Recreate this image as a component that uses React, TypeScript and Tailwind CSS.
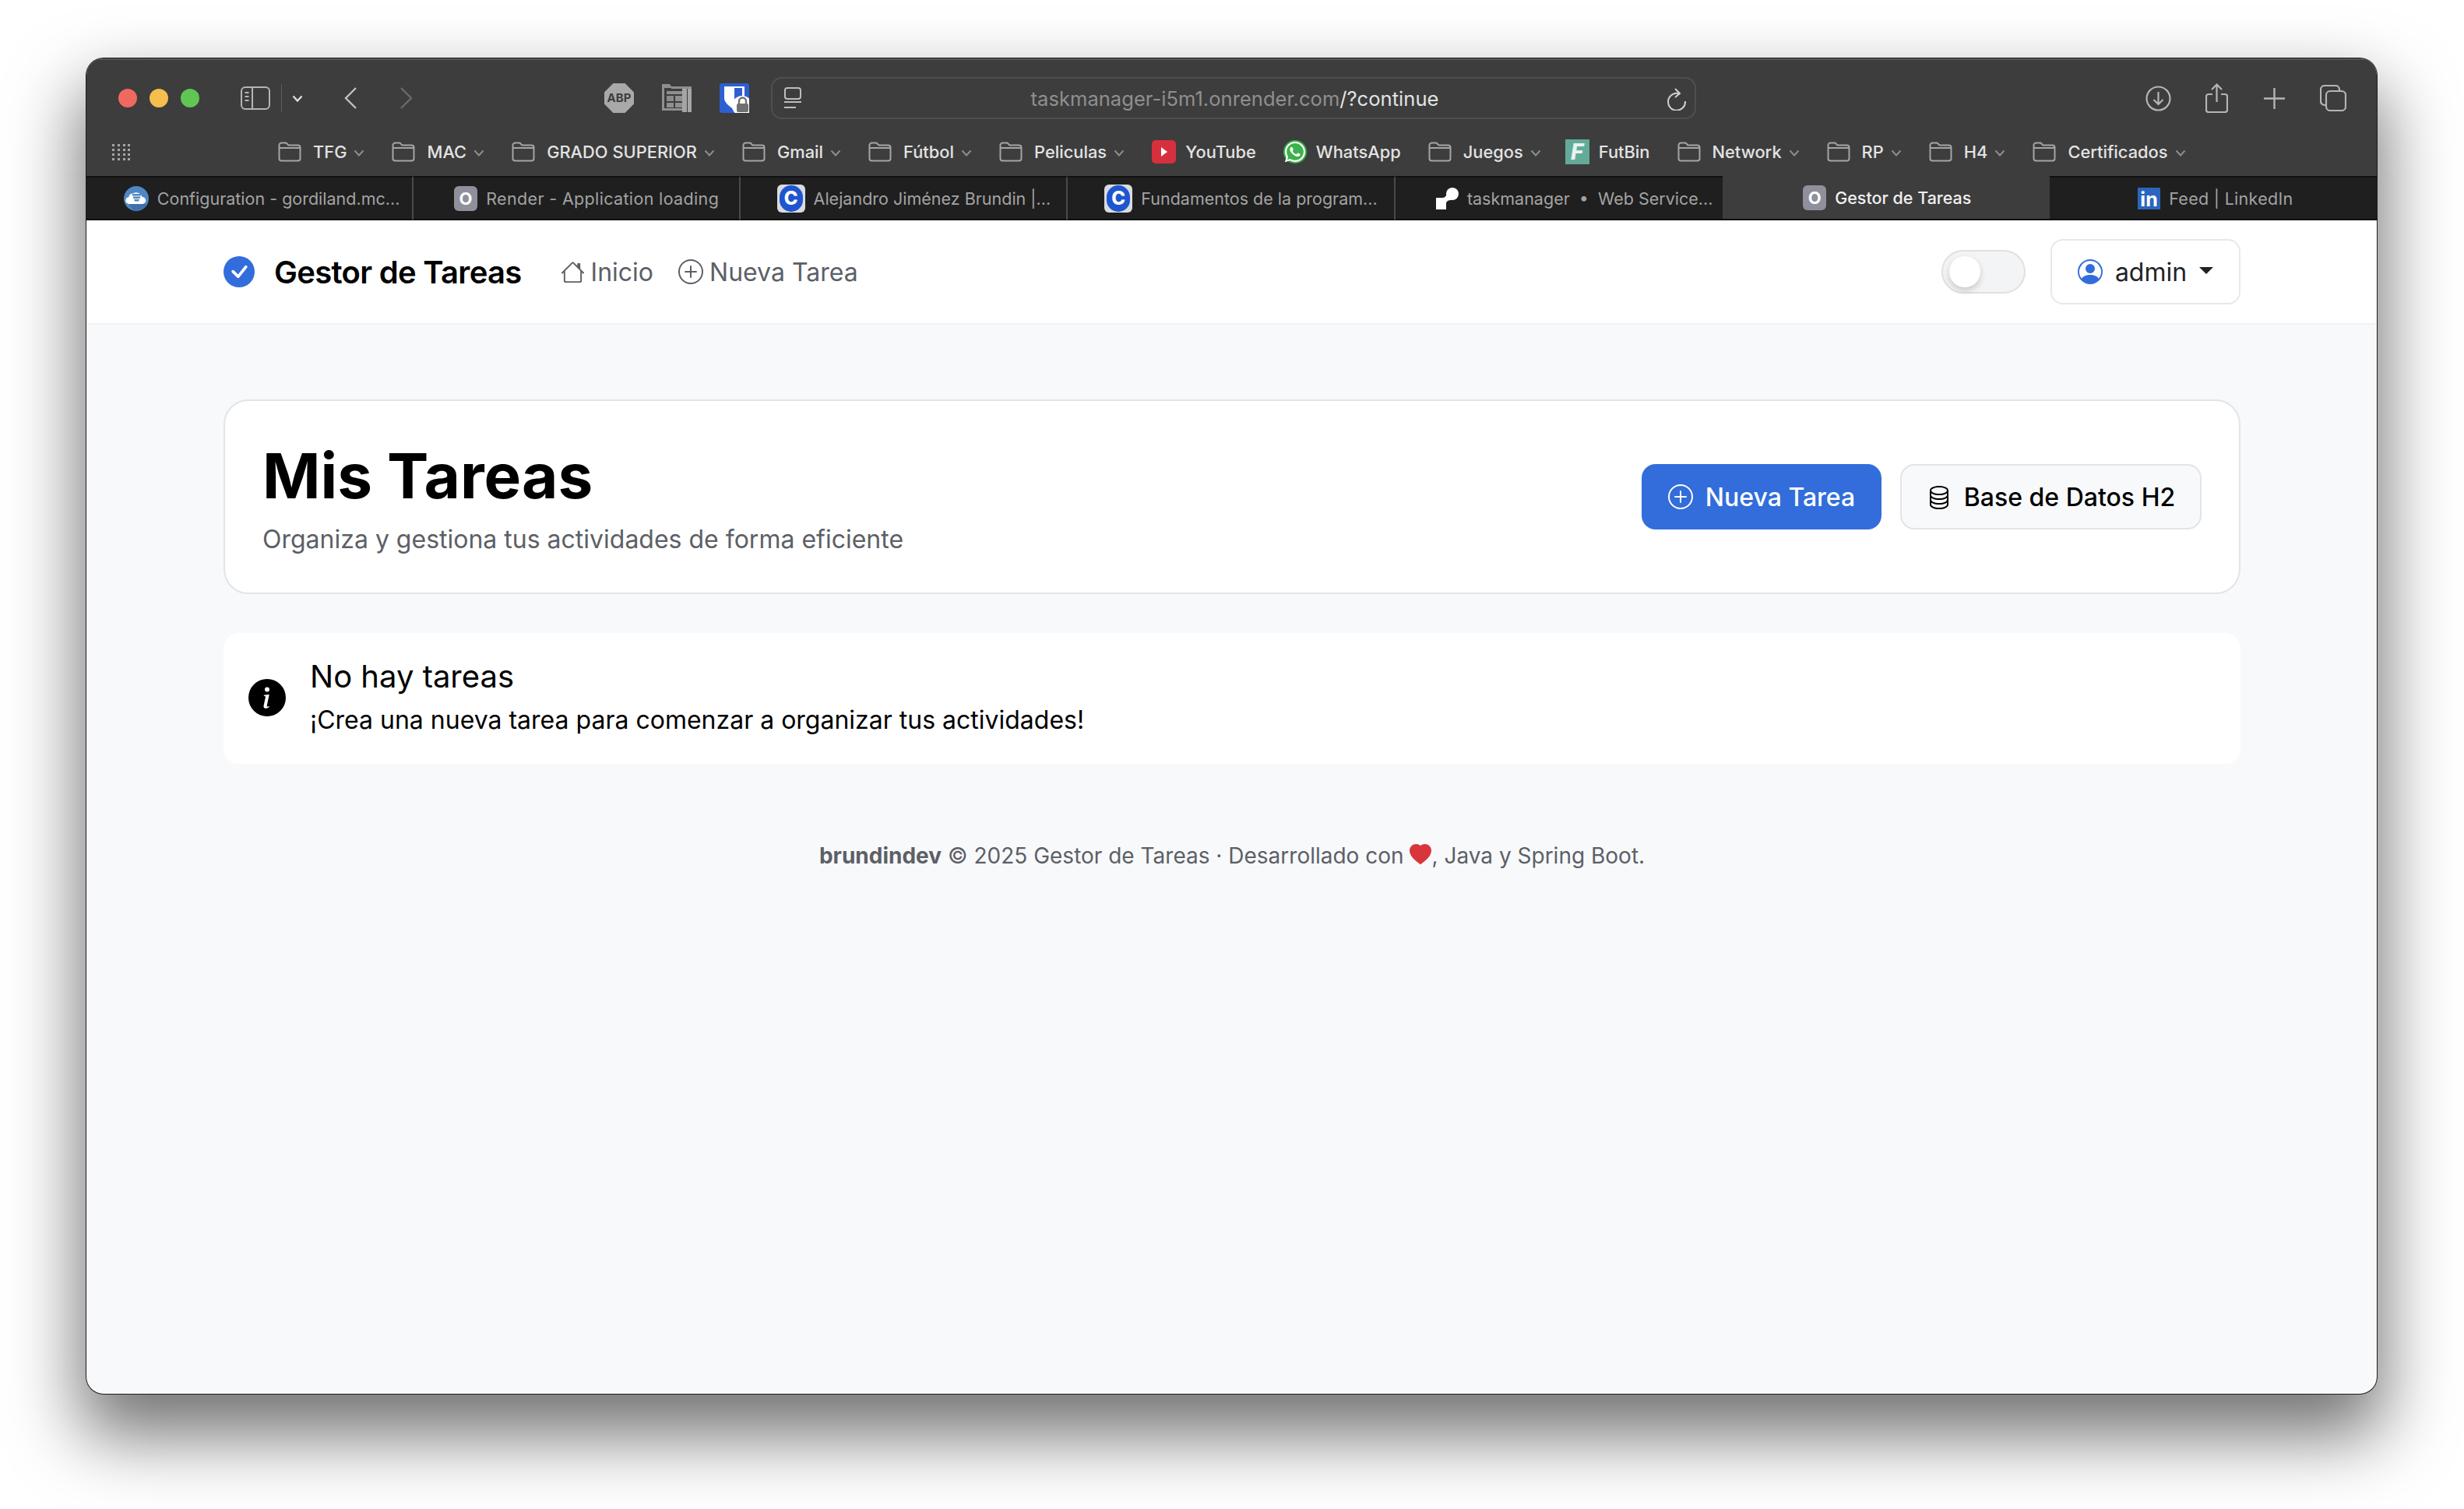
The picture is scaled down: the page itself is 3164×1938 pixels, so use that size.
import { BsCheckCircleFill, BsDatabase, BsHeartFill, BsHouse, BsInfoCircleFill, BsPersonCircle, BsPlusCircle } from "react-icons/bs";
import { FaWhatsapp } from "react-icons/fa";

const inter = "font-['Inter',sans-serif]";

const FolderIcon = () => (
  <svg width="30" height="26" viewBox="0 0 30 26" fill="none" stroke="#a5a5a5" strokeWidth="2" className="shrink-0">
    <path d="M1.5 4.5a3 3 0 0 1 3-3h6l3 3h12a3 3 0 0 1 3 3v14a3 3 0 0 1-3 3h-21a3 3 0 0 1-3-3z" />
    <path d="M1.5 8h27" />
  </svg>
);

const SmallChevron = () => (
  <svg width="14" height="9" viewBox="0 0 14 9" fill="none" stroke="#8d8d8d" strokeWidth="2" className="shrink-0 mt-[2px]">
    <path d="M1.5 1.5 7 7.5l5.5-6" />
  </svg>
);

const GrayO = () => (
  <div className="w-[30px] h-[32px] rounded-[6px] bg-[#8f909c] flex items-center justify-center text-white font-bold text-[22px] leading-none shrink-0">
    O
  </div>
);

const BlueC = () => (
  <div className="w-[36px] h-[36px] rounded-[6px] bg-[#d9dbe0] flex items-center justify-center shrink-0">
    <div className="w-[30px] h-[34px] rounded-full bg-[#1f55cf] flex items-center justify-center text-white font-extrabold text-[24px] leading-none">
      C
    </div>
  </div>
);

const CloudIcon = () => (
  <svg width="32" height="32" viewBox="0 0 32 32" className="shrink-0">
    <circle cx="16" cy="16" r="16" fill="#4f87c4" />
    <path d="M6 22 27 22 29 25A16 16 0 0 1 12 31z" fill="#3f70ad" />
    <path d="M7 23a4.5 4.5 0 0 1-.5-9 5 5 0 0 1 5-4.500 8 8 0 0 1 12 4.500 4.500 4.500 0 0 1 .5 9z" fill="#fff" />
    <path d="M10.500 10h12l-1 2.500h-10zM11.500 13.500h10l-1 2.500h-8zM13 17h7l-1 2.500h-5z" fill="#4f87c4" />
  </svg>
);

const RenderLogo = () => (
  <svg width="29" height="28" viewBox="0 0 29 28" className="shrink-0">
    <circle cx="21" cy="8" r="8" fill="#fff" />
    <path d="M0 13h8c3 0 5-2 6-5l6 8c-4 0-7 1-7 5v7H0z" fill="#fff" />
  </svg>
);

const tabs = [
  { icon: <CloudIcon />, title: "Configuration - gordiland.mc...", cls: "pl-[32px]" },
  { icon: <GrayO />, title: "Render - Application loading", cls: "pl-[26px] tracking-[0.35px]" },
  { icon: <BlueC />, title: "Alejandro Jiménez Brundin |...", cls: "pl-[26px]" },
  { icon: <BlueC />, title: "Fundamentos de la program...", cls: "pl-[26px]" },
  { icon: <RenderLogo />, title: "taskmanager  •  Web Service...", cls: "pl-[40px]" },
  { icon: <GrayO />, title: "Gestor de Tareas", active: true, cls: "pl-[3px]" },
  {
    icon: (
      <div className="w-[29px] h-[28px] bg-[#2a66bd] text-white font-bold text-[25px] leading-none flex items-end justify-center shrink-0">
        in
      </div>
    ),
    title: "Feed | LinkedIn",
    cls: "pl-[6px] tracking-[0.3px]",
  },
];

const bookmarks = [
  { label: "TFG", folder: true },
  { label: "MAC", folder: true },
  { label: "GRADO SUPERIOR", folder: true },
  { label: "Gmail", folder: true },
  { label: "Fútbol", folder: true },
  { label: "Peliculas", folder: true },
  {
    label: "YouTube",
    icon: (
      <div className="w-[31px] h-[30px] rounded-[5px] bg-[#d6303e] flex items-center justify-center shrink-0">
        <div className="w-0 h-0 border-y-[6px] border-y-transparent border-l-[8px] border-l-white" />
      </div>
    ),
  },
  {
    label: "WhatsApp",
    icon: (
      <div className="w-[30px] h-[30px] rounded-full bg-[#3db24b] flex items-center justify-center shrink-0">
        <FaWhatsapp className="text-white text-[30px]" />
      </div>
    ),
  },
  { label: "Juegos", folder: true, cls: "mr-[-4px]" },
  {
    label: "FutBin",
    icon: (
      <div className="w-[31px] h-[32px] bg-[#63ab98] text-[#e8f3f0] font-extrabold italic text-[28px] leading-none flex items-center justify-center shrink-0">
        F
      </div>
    ),
  },
  { label: "Network", folder: true },
  { label: "RP", folder: true },
  { label: "H4", folder: true },
  { label: "Certificados", folder: true },
];

const BrowserChrome = () => (
  <div className="bg-[#3d3d3d] h-[151px] border-t-2 border-[#555] shrink-0">
    <div className="flex items-center h-[98px] pl-[41px] pr-[39px] text-[#b9b9b9]">
      <div className="flex gap-[16px]">
        <div className="w-[24px] h-[24px] rounded-full bg-[#f0695f]" />
        <div className="w-[24px] h-[24px] rounded-full bg-[#f6be4f]" />
        <div className="w-[24px] h-[24px] rounded-full bg-[#61c554]" />
      </div>
      <svg width="38" height="30" viewBox="0 0 38 30" fill="none" stroke="#b5b5b5" strokeWidth="2" className="ml-[53px]">
        <rect x="1" y="1" width="36" height="28" rx="5" />
        <path d="M15 1v28" />
        <path d="M5.5 8h5M5.5 13h5M5.5 18h5" />
      </svg>
      <div className="w-[1px] h-[36px] bg-[#5c5c5c] ml-[14px]" />
      <svg width="14" height="9" viewBox="0 0 14 9" fill="none" stroke="#dcdcdc" strokeWidth="2.4" className="ml-[13px]">
        <path d="M1.5 1.5 7 7.5l5.5-6" />
      </svg>
      <svg width="16" height="28" viewBox="0 0 16 28" fill="none" stroke="#c0c0c0" strokeWidth="2.4" className="ml-[53px]">
        <path d="M15 1 2 14l13 13" />
      </svg>
      <svg width="16" height="28" viewBox="0 0 16 28" fill="none" stroke="#6b6b6b" strokeWidth="2.4" className="ml-[56px]">
        <path d="M1 1l13 13L1 27" />
      </svg>
      <div className="w-[38px] h-[38px] ml-[246px] bg-[#a9a9a9] text-[#3d3d3d] text-[15px] font-bold flex items-center justify-center [clip-path:polygon(30%_0,70%_0,100%_30%,100%_70%,70%_100%,30%_100%,0_70%,0_30%)]">
        ABP
      </div>
      <svg width="38" height="36" viewBox="0 0 38 36" fill="#8f8f8f" className="ml-[36px]">
        <path d="M0 0h10l2 3h26v3H12v-1H3v26h24v3H0z" />
        <rect x="6" y="9" width="20" height="4" />
        <rect x="6" y="15" width="9" height="7" fill="#8a8a8a" />
        <rect x="17" y="15" width="9" height="7" />
        <rect x="6" y="24" width="9" height="6" />
        <rect x="17" y="24" width="9" height="6" />
        <rect x="26" y="6" width="6" height="30" fill="#a5a5a5" />
        <rect x="33" y="6" width="5" height="30" fill="#a5a5a5" />
      </svg>
      <svg width="38" height="38" viewBox="0 0 38 38" className="ml-[36px]">
        <rect width="38" height="38" rx="3" fill="#2d5fd3" />
        <path d="M6 4h26v15c0 6-7 11-13 15-6-4-13-9-13-15z" fill="#fff" />
        <path d="M19 6h10v20H19z" fill="#2d5fd3" />
        <circle cx="29" cy="29" r="13" fill="#fff" />
        <rect x="22" y="26" width="15" height="11" rx="2" fill="#707070" />
        <path d="M25 26v-3a4.500 4.500 0 0 1 9 0v3" fill="none" stroke="#707070" strokeWidth="2.4" />
      </svg>
      <div className="relative ml-[28px] w-[1188px] h-[54px] rounded-[14px] border-2 border-[#4f4f4f] flex items-center justify-center shrink-0 text-[25.6px]">
        <svg width="24" height="28" viewBox="0 0 24 28" fill="none" stroke="#bdbdbd" strokeWidth="2" className="absolute left-[14px] top-[11px]">
          <rect x="2" y="1" width="20" height="14" rx="3" />
          <path d="M1 19h22" />
          <path d="M1 26h15" />
        </svg>
        <span className={`${inter} text-[#8f8f8f] mt-[2px] ml-[3px]`}>
          taskmanager-i5m1.onrender.com<span className="text-[#e3e3e3]">/?continue</span>
        </span>
        <svg width="26" height="30" viewBox="0 0 26 30" fill="none" stroke="#cfcfcf" strokeWidth="2" className="absolute right-[10px] top-[11px]">
          <path d="M17 8.500A11 11 0 1 0 24 18" />
          <path d="M11 2l6 6-6 5" />
        </svg>
      </div>
      <div className="flex-1" />
      <svg width="33" height="33" viewBox="0 0 33 33" fill="none" stroke="#b5b5b5" strokeWidth="2.2">
        <circle cx="16.5" cy="16.5" r="15" />
        <path d="M16.5 8v16M10.5 18l6 6 6-6" />
      </svg>
      <svg width="29" height="38" viewBox="0 0 29 38" fill="none" stroke="#b5b5b5" strokeWidth="2.2" className="ml-[44px]">
        <path d="M9 14H4a3 3 0 0 0-3 3v17a3 3 0 0 0 3 3h21a3 3 0 0 0 3-3V17a3 3 0 0 0-3-3h-5" />
        <path d="M14.5 24V2M8 8l6.5-6.5L21 8" />
      </svg>
      <svg width="27" height="27" viewBox="0 0 27 27" fill="none" stroke="#b5b5b5" strokeWidth="2.4" className="ml-[46px]">
        <path d="M13.5 0v27M0 13.5h27" />
      </svg>
      <svg width="34" height="34" viewBox="0 0 34 34" fill="none" stroke="#b5b5b5" strokeWidth="2.2" className="ml-[45px]">
        <rect x="8" y="8" width="25" height="25" rx="5" />
        <path d="M8 26H6a5 5 0 0 1-5-5V6a5 5 0 0 1 5-5h14a5 5 0 0 1 5 5v2" />
      </svg>
    </div>
    <div className="flex items-center h-[41px] pl-[33px] text-[#e3e3e3] text-[21.85px]">
      <div className="grid grid-cols-4 gap-[3px] w-[24px] shrink-0">
        {Array.from({ length: 16 }).map((_, i) => (
          <div key={i} className="w-[3px] h-[3px] bg-[#a5a5a5]" />
        ))}
      </div>
      <div className={`flex items-center gap-[35px] ml-[189px] ${inter} font-medium`}>
        {bookmarks.map(b => (
          <div key={b.label} className={`flex items-center ${b.cls ?? ""}`}>
            {b.folder ? <FolderIcon /> : b.icon}
            <span className={`whitespace-nowrap ${b.folder ? "ml-[15px] mr-[9px]" : "ml-[12px]"}`}>{b.label}</span>
            {b.folder && <SmallChevron />}
          </div>
        ))}
      </div>
    </div>
  </div>
);

const TabBar = () => (
  <div className={`grid grid-cols-7 h-[57px] bg-[#1f1f1f] shrink-0 ${inter} text-[21.5px]`}>
    {tabs.map((t, i) => (
      <div
        key={t.title}
        className={`flex items-center justify-center gap-[11px] border-b-2 border-[#111] min-w-0 ${t.cls} ${
          t.active
            ? "bg-[#3d3d3d] text-[#f0f0f0] font-medium"
            : "border-t-2 border-t-[#111] text-[#a3a3a3]"
        } ${i < 4 ? "border-r-2 border-r-[#4a4a4a]" : ""}`}
      >
        {t.icon}
        <span className="whitespace-pre mt-[1px]">{t.title}</span>
      </div>
    ))}
  </div>
);

const Navbar = () => (
  <nav className="h-[134px] bg-white border-b-2 border-[#f1f2f4] pl-[176px] pr-[175px] flex items-center shrink-0">
    <BsCheckCircleFill className="text-[#326ddb] text-[40px]" />
    <span className="ml-[25px] mt-[2px] text-[40px] font-semibold text-black tracking-[-0.7px]">Gestor de Tareas</span>
    <div className="flex items-center ml-[50px] text-[#5c6066] text-[32px]">
      <BsHouse className="text-[31px]" />
      <span className="ml-[8px] mt-[2px]">Inicio</span>
    </div>
    <div className="flex items-center ml-[32px] text-[#5c6066] text-[32px]">
      <BsPlusCircle className="text-[32px]" />
      <span className="ml-[8px] mt-[2px]">Nueva Tarea</span>
    </div>
    <div className="flex-1" />
    <div className="relative w-[108px] h-[56px] rounded-full border-2 border-[#dfe0e3] bg-[#f3f4f6]">
      <div className="absolute left-[8px] top-[6px] w-[40px] h-[40px] rounded-full bg-white shadow-[0_4px_8px_rgba(0,0,0,0.18)]" />
    </div>
    <div className="ml-[32px] w-[244px] h-[84px] rounded-[16px] border-2 border-[#e6e8eb] flex items-center justify-center text-[#1f2328] text-[32px]">
      <BsPersonCircle className="text-[#326ddb] text-[32px]" />
      <span className="ml-[16px] mt-[2px]">admin</span>
      <div className="ml-[16px] mb-[4px] w-0 h-0 border-x-[9px] border-x-transparent border-t-[9px] border-t-[#1f2328]" />
    </div>
  </nav>
);

export default function App() {
  return (
    <div className={`min-h-screen bg-white pt-[75px] pl-[111px] ${inter}`}>
      <div className="w-[2941px] h-[1715px] rounded-[22px] overflow-hidden flex flex-col bg-[#f8f9fb] shadow-[0_0_0_1px_#1c1c1c,0_46px_90px_8px_rgba(0,0,0,0.55)]">
        <BrowserChrome />
        <TabBar />
        <Navbar />
        <main className="pl-[176px] pr-[175px] pt-[96px]">
          <section className="h-[250px] bg-white rounded-[32px] border-2 border-[#e1e4e9] flex items-center justify-between pl-[48px] pr-[48px]">
            <div className="pt-[4px]">
              <h1 className="text-[80px] leading-[96px] font-bold text-black">Mis Tareas</h1>
              <p className="mt-[10px] text-[32px] leading-[48px] text-[#5c6066]">
                Organiza y gestiona tus actividades de forma eficiente
              </p>
            </div>
            <div className="flex gap-[24px]">
              <button className="h-[84px] w-[308px] rounded-[18px] bg-[#326ddb] text-white text-[32px] font-medium flex items-center justify-center gap-[16px]">
                <BsPlusCircle className="text-[32px]" />
                <span className="mt-[2px]">Nueva Tarea</span>
              </button>
              <button className="h-[84px] w-[387px] rounded-[18px] bg-[#f8f9fb] border-2 border-[#e1e4e9] text-black text-[32px] font-medium flex items-center justify-center gap-[16px]">
                <BsDatabase className="text-[32px]" />
                <span className="mt-[2px]">Base de Datos H2</span>
              </button>
            </div>
          </section>
          <section className="mt-[50px] h-[168px] bg-white rounded-[20px] flex items-center pl-[32px]">
            <BsInfoCircleFill className="text-black text-[48px] mt-[-2px]" />
            <div className="ml-[31px]">
              <h2 className="text-[40px] leading-[48px] text-black">No hay tareas</h2>
              <p className="mt-[8px] text-[32px] leading-[48px] text-black">
                ¡Crea una nueva tarea para comenzar a organizar tus actividades!
              </p>
            </div>
          </section>
          <footer className="mt-[97px] text-center text-[28px] leading-[42px] text-[#5c6066]">
            <b className="font-bold">brundindev</b> © 2025 Gestor de Tareas · Desarrollado con{" "}
            <BsHeartFill className="inline text-[#d8353d] text-[28px] align-[-3px]" />, Java y Spring Boot.
          </footer>
        </main>
      </div>
    </div>
  );
}
